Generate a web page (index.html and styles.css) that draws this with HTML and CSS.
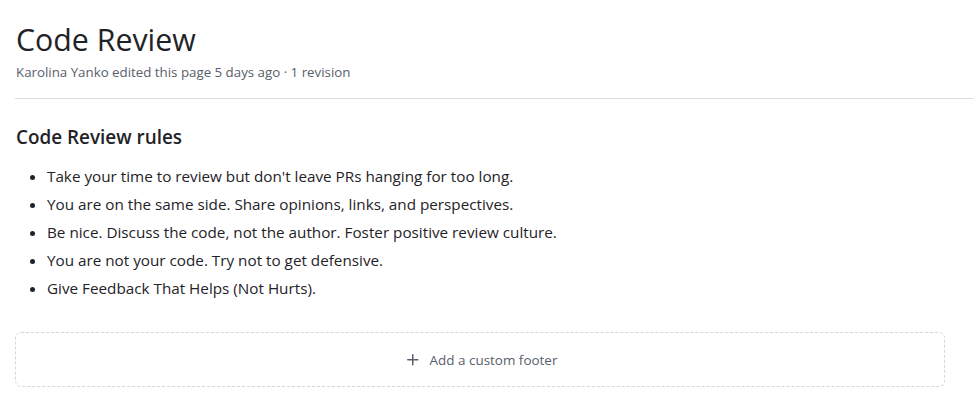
FILE: index.html
```html
<!DOCTYPE html>
<html>
<head>
<meta charset="utf-8">
<link rel="stylesheet" href="styles.css">
</head>
<body>
<div class="page">
  <div class="head">
    <h1 class="title">Code Review</h1>
    <div class="meta">Karolina Yanko edited this page 5 days ago · 1 revision</div>
  </div>
  <div class="body">
    <h3 class="h3">Code Review rules</h3>
    <ul class="rules">
      <li>Take your time to review but don't leave PRs hanging for too long.</li>
      <li>You are on the same side. Share opinions, links, and perspectives.</li>
      <li>Be nice. Discuss the code, not the author. Foster positive review culture.</li>
      <li>You are not your code. Try not to get defensive.</li>
      <li>Give Feedback That Helps (Not Hurts).</li>
    </ul>
    <div class="footer-box">
      <svg class="plus" width="16" height="16" viewBox="0 0 16 16"><path d="M7.75 2a.75.75 0 0 1 .75.75V7h4.25a.75.75 0 0 1 0 1.5H8.5v4.25a.75.75 0 0 1-1.5 0V8.5H2.75a.75.75 0 0 1 0-1.5H7V2.75A.75.75 0 0 1 7.75 2Z" fill="#57606a"/></svg>
      <span>Add a custom footer</span>
    </div>
  </div>
</div>
</body>
</html>
```
FILE: styles.css
```css
html, body { margin: 0; padding: 0; background: #fff; }
body {
  font-family: "Open Sans", "Noto Sans", sans-serif;
  color: #1f2328;
}
.page { padding: 0 0 0 15px; }
.head {
  border-bottom: 1px solid #d8dee4;
  padding-top: 20px;
  padding-bottom: 16px;
}
.title {
  margin: 0;
  font-size: 30.3px;
  font-weight: 400;
  line-height: 40px;
  padding-left: 1px;
}
.meta {
  font-size: 13.3px;
  color: #57606a;
  line-height: 20px;
  margin-top: 2px;
  padding-left: 1px;
}
.body { padding-right: 28px; }
.h3 {
  margin: 26px 0 0 1px;
  font-size: 18.9px;
  font-weight: 600;
  line-height: 25px;
}
.rules {
  margin: 14px 0 0 0;
  padding-left: 32px;
  font-size: 15.25px;
  line-height: 24px;
}
.rules li { margin-bottom: 4px; }
.footer-box {
  margin-top: 32px;
  height: 53px;
  border: 1px dashed #d0d7de;
  border-radius: 6px;
  display: flex;
  align-items: center;
  justify-content: center;
  gap: 9px;
  font-size: 13.45px;
  color: #57606a;
}
.plus { margin-left: 2px; }
```
